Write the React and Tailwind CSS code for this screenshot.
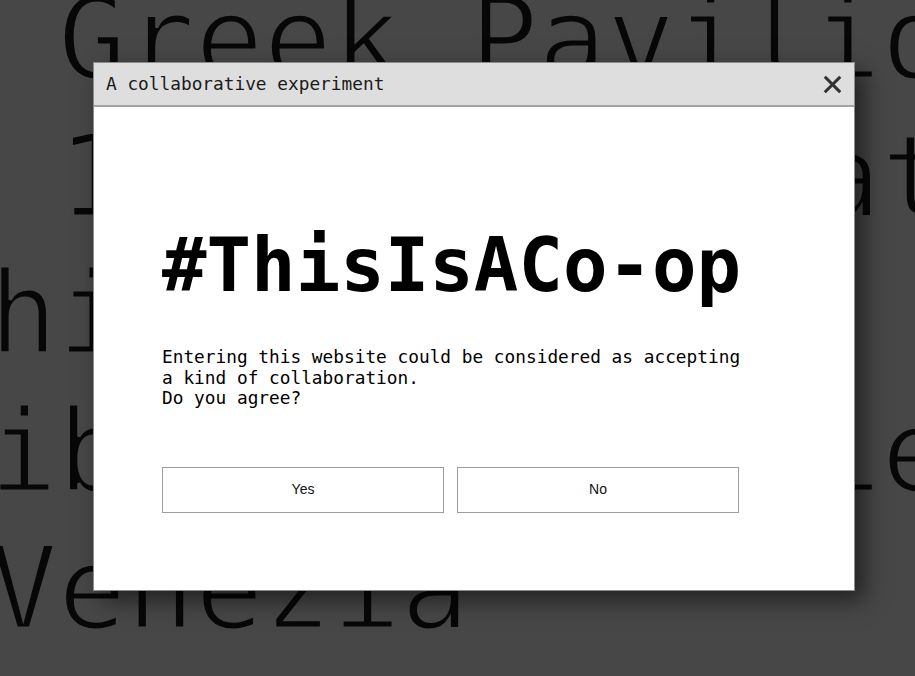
const backdropLines = [
    " Greek Pavilion",
    " 17th International",
    "hitecture",
    "ibition La Biennale di",
    "Venezia",
];

const CloseIcon = () => (
    <svg
        xmlns="http://www.w3.org/2000/svg"
        viewBox="0 0 20 20"
        fill="none"
        stroke="currentColor"
        strokeWidth={3.2}
        strokeLinecap="square"
        className="w-[19px] h-[19px]"
    >
        <path d="M3 3l14 14M17 3L3 17" />
    </svg>
);

const App = () => {
    return (
        <div className="relative w-full h-[676px] overflow-hidden bg-[#474747]">
            {/* Backdrop text, thinned with a stroke in the page colour */}
            <div className="-mt-[30px] -ml-[11px] font-['DejaVu_Sans_Mono',monospace] text-[114px] leading-[137.5px] text-[#070707] [-webkit-text-stroke:3px_#474747] whitespace-pre select-none">
                {backdropLines.map((line) => (
                    <div key={line}>{line}</div>
                ))}
            </div>

            {/* Modal */}
            <div className="absolute left-[93px] top-[62px] w-[762px] h-[529px] bg-white border border-[#8c8c8c] shadow-[9px_9px_22px_rgba(0,0,0,0.55)] font-['DejaVu_Sans_Mono',monospace] text-[#111]">
                {/* Title bar */}
                <div className="flex items-center justify-between h-[44px] pl-[12px] pr-[12px] bg-[#dedede] border-b-2 border-[#a3a3a3]">
                    <span className="text-[17.8px] leading-none text-[#1a1a1a]">
                        A collaborative experiment
                    </span>
                    <button className="text-[#333] focus:outline-none">
                        <CloseIcon />
                    </button>
                </div>

                {/* Content */}
                <div className="pl-[68px] pt-[121px]">
                    <h1 className="text-[74px] leading-none font-bold text-black">
                        #ThisIsACo-op
                    </h1>
                    <p className="mt-[45px] text-[17.8px] leading-[20.5px] whitespace-pre text-black">
                        {"Entering this website could be considered as accepting\na kind of collaboration.\nDo you agree?"}
                    </p>
                    <div className="mt-[58px] grid grid-cols-2 gap-[13px] w-[577px]">
                        {["Yes", "No"].map((label) => (
                            <button
                                key={label}
                                className="h-[46px] bg-white border-[1.5px] border-[#9d9d9d] font-['Liberation_Sans',Arial,sans-serif] text-[14px] text-[#111]"
                            >
                                {label}
                            </button>
                        ))}
                    </div>
                </div>
            </div>
        </div>
    );
};

export default App;
